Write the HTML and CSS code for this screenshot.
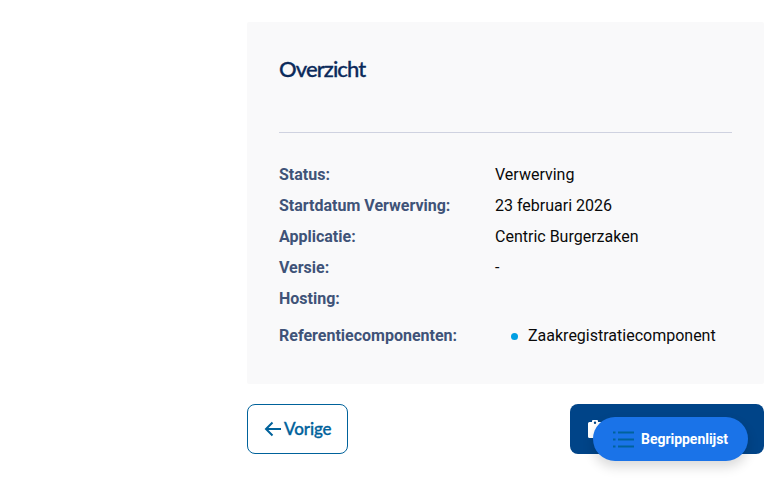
FILE: index.html
```html
<!DOCTYPE html>
<html lang="nl">
<head>
<meta charset="utf-8">
<title>Overzicht</title>
<link rel="stylesheet" href="styles.css">
</head>
<body>
<main class="content">
  <section class="card">
    <h2 class="title">Overzicht</h2>
    <hr class="divider">
    <dl class="rows">
      <div class="row"><dt>Status:</dt><dd>Verwerving</dd></div>
      <div class="row"><dt>Startdatum Verwerving:</dt><dd>23 februari 2026</dd></div>
      <div class="row"><dt>Applicatie:</dt><dd>Centric Burgerzaken</dd></div>
      <div class="row"><dt>Versie:</dt><dd>-</dd></div>
      <div class="row"><dt>Hosting:</dt><dd></dd></div>
      <div class="row row-list"><dt>Referentiecomponenten:</dt><dd><ul class="list"><li>Zaakregistratiecomponent</li></ul></dd></div>
    </dl>
  </section>
  <nav class="actions">
    <a class="btn btn-back" href="#">
      <svg width="18" height="16" viewBox="0 0 18 16" fill="none" stroke="currentColor" stroke-width="2"><path d="M17 8H2M8.500 1.500 2 8l6.500 6.500"/></svg>
      Vorige
    </a>
    <a class="btn btn-next" href="#">
      <svg width="14" height="18" viewBox="0 0 14 18"><path fill="#fff" fill-rule="evenodd" d="M5 0h4a1 1 0 0 1 1 1v1h2.500A1.500 1.500 0 0 1 14 3.500v13a1.500 1.500 0 0 1-1.500 1.500h-11A1.500 1.500 0 0 1 0 16.500v-13A1.500 1.500 0 0 1 1.500 2H4V1a1 1 0 0 1 1-1zM7 1.500a1.200 1.200 0 1 0 0 2.400 1.200 1.200 0 0 0 0-2.400z"/></svg>
      Aanvraag indienen
    </a>
  </nav>
</main>
<button class="fab" type="button">
  <svg width="21" height="17" viewBox="0 0 21 17" stroke="#00629b" stroke-width="2" fill="none"><path d="M5 1.500h16M5 8.500h16M5 15.500h16M0 1.500h2.500M0 8.500h2.500M0 15.500h2.500"/></svg>
  Begrippenlijst
</button>
</body>
</html>
```
FILE: styles.css
```css
* { box-sizing: border-box; }
html, body { margin: 0; padding: 0; background: #fff; }
body { font-family: Roboto, "Liberation Sans", sans-serif; height: 493px; overflow: hidden; }
.content { margin-left: 247px; width: 517px; padding-top: 22px; }
.card { background: #f9f9fa; height: 362px; padding: 32px; border-radius: 2px; }
.title { margin: 0; font-family: Lato, sans-serif; font-weight: 500; font-size: 22px; letter-spacing: -0.9px; line-height: 30px; color: #0b2a5b; -webkit-text-stroke: 0.3px #0b2a5b; }
.divider { border: 0; border-top: 1px solid #cfd2e0; margin: 48px 0 0; }
.rows { margin: 26px 0 0; }
.row { display: flex; height: 31px; align-items: flex-start; font-size: 16px; line-height: 31px; }
.row dt { width: 216px; font-weight: 700; color: #3f5378; flex: none; }
.row dd { margin: 0; color: #0a0a0a; }
.row-list { margin-top: 6px; }
.list { list-style: none; margin: 0; padding: 0 0 0 15px; }
.list li { position: relative; padding-left: 18px; }
.list li::before { content: ""; position: absolute; left: 1px; top: 13px; width: 7px; height: 7px; border-radius: 50%; background: #009fe3; }
.actions { display: flex; justify-content: space-between; margin-top: 20px; }
.btn { display: flex; align-items: center; height: 50px; border-radius: 8px; font-family: Lato, sans-serif; font-weight: 500; font-size: 17px; line-height: 48px; text-decoration: none; }
.btn-back { width: 101px; padding-left: 16px; gap: 2px; border: 1px solid #00629b; color: #00629b; background: #fff; -webkit-text-stroke: 0.35px #00629b; letter-spacing: -0.1px; }
.btn-next { width: 194px; padding-left: 18px; gap: 8px; background: #004488; color: #fff; font-size: 16.5px; }
.fab { position: absolute; left: 593px; top: 417px; width: 155px; height: 44px; border: 0; border-radius: 22px; background: #1a73e8; color: #fff; display: flex; align-items: center; gap: 7px; padding: 0 0 0 20px; font-family: Roboto, sans-serif; font-weight: 700; font-size: 14px; letter-spacing: -0.03px; box-shadow: 0 6px 12px rgba(0,0,0,.15); }
```
